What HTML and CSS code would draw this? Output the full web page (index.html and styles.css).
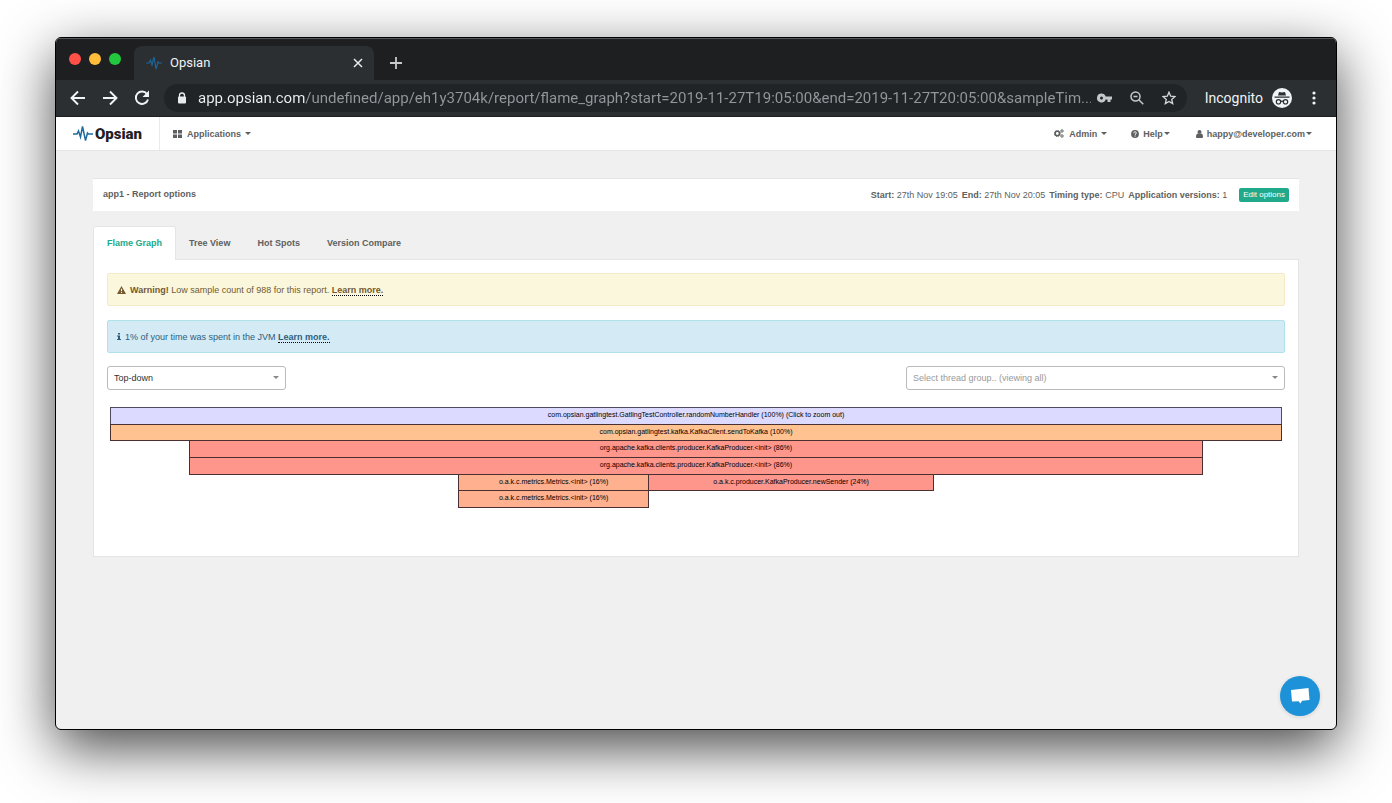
FILE: index.html
```html
<!DOCTYPE html>
<html lang="en">
<head>
<meta charset="utf-8">
<title>Opsian</title>
<link rel="stylesheet" href="styles.css">
</head>
<body>
<div class="window">
  <header class="tabstrip">
    <div class="lights"><span class="light red"></span><span class="light amber"></span><span class="light green"></span></div>
    <div class="browser-tab">
      <svg class="favicon" width="16" height="14" viewBox="0 0 16 14"><path d="M0 7h3l1.500-3 1.500 5 2-8 2 12 2-7 1 1h3" fill="none" stroke="#1d6596" stroke-width="1.200"/></svg>
      <span class="tab-title">Opsian</span>
      <button class="plain close" aria-label="Close tab"><svg width="10" height="10" viewBox="0 0 10 10"><path d="M1 1l8 8M9 1L1 9" stroke="#e8eaed" stroke-width="1.5"/></svg></button>
    </div>
    <button class="plain new-tab" aria-label="New tab"><svg width="12" height="12" viewBox="0 0 12 12"><path d="M6 0v12M0 6h12" stroke="#c8cacc" stroke-width="1.8"/></svg></button>
  </header>
  <div class="toolbar">
    <button class="plain" aria-label="Back"><svg width="16" height="16" viewBox="0 0 16 16"><path d="M15 8H2M8 1.5L1.5 8 8 14.500" fill="none" stroke="#f1f3f4" stroke-width="1.9"/></svg></button>
    <button class="plain" aria-label="Forward"><svg width="16" height="16" viewBox="0 0 16 16"><path d="M1 8h13M8 1.500L14.500 8 8 14.500" fill="none" stroke="#f1f3f4" stroke-width="1.9"/></svg></button>
    <button class="plain" aria-label="Reload"><svg width="16" height="16" viewBox="0 0 16 16"><path d="M13 4A6.200 6.200 0 1 0 14 9.500" fill="none" stroke="#f1f3f4" stroke-width="1.9"/><path d="M15 0.500V7H8.500z" fill="#f1f3f4"/></svg></button>
    <div class="omnibox">
      <svg width="10" height="12" viewBox="0 0 10 12"><path d="M2.500 5V3.500a2.500 2.500 0 0 1 5 0V5" fill="none" stroke="#e8eaed" stroke-width="1.3"/><rect x="1" y="4.500" width="8" height="7" rx="1" fill="#e8eaed"/></svg>
      <input class="url" type="text" aria-label="Address" value="app.opsian.com/undefined/app/eh1y3704k/report/flame_graph?start=2019-11-27T19:05:00&amp;end=2019-11-27T20:05:00&amp;sampleTim...">
      <button class="plain" aria-label="Saved passwords"><svg width="15" height="10" viewBox="0 0 15 10"><path fill-rule="evenodd" d="M4.500.500a4.500 4.500 0 0 1 4.200 3H15v3h-1.500V9h-3V6.500H8.700A4.500 4.500 0 1 1 4.500.500zm0 3a1.500 1.500 0 1 0 0 3 1.500 1.500 0 0 0 0-3z" fill="#c4c7c9"/></svg></button>
      <button class="plain" aria-label="Zoom"><svg width="14" height="14" viewBox="0 0 14 14"><circle cx="5.500" cy="5.500" r="4.500" fill="none" stroke="#c4c7c9" stroke-width="1.5"/><path d="M3.500 5.500h4M9 9l4.300 4.300" stroke="#c4c7c9" stroke-width="1.5"/></svg></button>
      <button class="plain" aria-label="Bookmark"><svg width="14" height="14" viewBox="0 0 14 14"><path d="M7 1.200l1.700 4 4.300.400-3.300 2.800 1 4.200L7 10.400l-3.700 2.200 1-4.200L1 5.600l4.300-.400z" fill="none" stroke="#d4d6d8" stroke-width="1.300"/></svg></button>
    </div>
    <span class="incognito">Incognito</span>
    <svg width="20" height="20" viewBox="0 0 20 20"><circle cx="10" cy="10" r="10" fill="#f1f3f4"/><path d="M7 4l3 .500L13 4l1 3.500H6zM2.500 8.500h15v1.200h-15z" fill="#2b2f32"/><g fill="none" stroke="#2b2f32" stroke-width="1.200"><circle cx="6.500" cy="13.800" r="2.200"/><circle cx="13.500" cy="13.800" r="2.200"/><path d="M8.700 13.500q1.300-.800 2.600 0"/></g></svg>
    <button class="plain menu" aria-label="Menu"><svg width="4" height="14" viewBox="0 0 4 14"><g fill="#f1f3f4"><circle cx="2" cy="2" r="1.600"/><circle cx="2" cy="7" r="1.600"/><circle cx="2" cy="12" r="1.600"/></g></svg></button>
  </div>

  <nav class="navbar">
    <a class="brand" href="#"><svg width="20" height="18" viewBox="0 0 20 18"><path d="M0 9h4l1.500-3 2 6L9.500 1.500l3 14 2-7.500 1 1H20" fill="none" stroke="#1f6a9c" stroke-width="1.500"/></svg><span>Opsian</span></a>
    <button class="plain nav-item apps"><svg width="9" height="8" viewBox="0 0 9 8"><path d="M0 0h4v3.500H0zM5 0h4v3.500H5zM0 4.500h4V8H0zM5 4.500h4V8H5z" fill="#5e5f60"/></svg><span>Applications</span><i class="caret"></i></button>
    <div class="nav-right">
      <button class="plain nav-item admin"><svg width="10" height="9" viewBox="0 0 10 9"><g fill="none" stroke="#5e5f60"><circle cx="3.300" cy="4.500" r="2.200" stroke-width="1.600"/><circle cx="3.300" cy="4.500" r="3" stroke-dasharray="1.200 1.150"/><circle cx="8" cy="2" r="1.200"/><circle cx="8" cy="7" r="1.200"/></g></svg><span>Admin</span><i class="caret"></i></button>
      <button class="plain nav-item help"><svg width="8" height="8" viewBox="0 0 8 8"><circle cx="4" cy="4" r="3.900" fill="#5e5f60"/><path d="M2.700 3.200C2.700 1.300 5.400 1.400 5.300 3c0 .900-1.200.800-1.200 1.900M4.100 5.500v1.100" fill="none" stroke="#fff" stroke-width="1"/></svg><span>Help</span><i class="caret"></i></button>
      <button class="plain nav-item user"><svg width="7" height="8" viewBox="0 0 7 8"><circle cx="3.500" cy="2.100" r="2" fill="#5e5f60"/><path d="M0 7q0-3.500 2-3.500 1.500 1 3 0 2 0 2 3.500 0 1-1 1H1Q0 8 0 7z" fill="#5e5f60"/></svg><span>happy@developer.com</span><i class="caret"></i></button>
    </div>
  </nav>

  <main class="content">
    <section class="options">
      <h1>app1 - Report options</h1>
      <div class="facts">
        <span><b>Start:</b> 27th Nov 19:05</span>
        <span><b>End:</b> 27th Nov 20:05</span>
        <span><b>Timing type:</b> CPU</span>
        <span><b>Application versions:</b> 1</span>
        <button class="plain edit">Edit options</button>
      </div>
    </section>

    <div class="tabs">
      <a class="tab active" href="#">Flame Graph</a>
      <a class="tab" href="#">Tree View</a>
      <a class="tab" href="#">Hot Spots</a>
      <a class="tab" href="#">Version Compare</a>
    </div>
    <section class="panel">
      <p class="alert warning"><svg width="9" height="8" viewBox="0 0 9 8"><path d="M4.500 0L9 8H0z" fill="#74592f"/><path d="M4.500 2.800v2.500M4.500 6v1" stroke="#faf7dc" stroke-width="1.100"/></svg><span><b>Warning!</b> Low sample count of 988 for this report. <a href="#">Learn more.</a></span></p>
      <p class="alert info"><svg width="4" height="7" viewBox="0 0 4 7"><path d="M1 0h2v1.600H1zM0 2.500h3V6h1v1H0V6h1V3.500H0z" fill="#2b5f80"/></svg><span>1% of your time was spent in the JVM <a href="#">Learn more.</a></span></p>
      <div class="filters">
        <div class="picker direction"><select aria-label="Direction"><option>Top-down</option></select></div>
        <div class="picker threads"><select aria-label="Thread group"><option>Select thread group.. (viewing all)</option></select></div>
      </div>
      <div class="graph">
        <div class="level"><div class="frame lilac" style="width:100%">com.opsian.gatlingtest.GatlingTestController.randomNumberHandler (100%) (Click to zoom out)</div></div>
        <div class="level"><div class="frame orange" style="width:100%">com.opsian.gatlingtest.kafka.KafkaClient.sendToKafka (100%)</div></div>
        <div class="level"><div class="frame red-hot" style="margin-left:6.7%;width:86.6%">org.apache.kafka.clients.producer.KafkaProducer.&lt;init&gt; (86%)</div></div>
        <div class="level"><div class="frame red-hot" style="margin-left:6.7%;width:86.6%">org.apache.kafka.clients.producer.KafkaProducer.&lt;init&gt; (86%)</div></div>
        <div class="level"><div class="frame peach" style="margin-left:29.7%;width:16.3%">o.a.k.c.metrics.Metrics.&lt;init&gt; (16%)</div><div class="frame red-hot" style="width:24.4%">o.a.k.c.producer.KafkaProducer.newSender (24%)</div></div>
        <div class="level"><div class="frame peach" style="margin-left:29.7%;width:16.3%">o.a.k.c.metrics.Metrics.&lt;init&gt; (16%)</div></div>
      </div>
    </section>
  </main>
  <button class="plain chat" aria-label="Open chat"><svg width="20" height="18" viewBox="0 0 20 18"><path d="M1 3l17.500-2 1 12-7.500.700L10.500 16.500 8.500 14.200 2 14.500z" fill="#fff"/></svg></button>
</div>
</body>
</html>
```
FILE: styles.css
```css
* { box-sizing: border-box; }
body {
  margin: 0;
  min-height: 100vh;
  padding: 37px 55px 73px;
  display: flex;
  background: #fff;
  font: 9px/12px "Liberation Sans", Arial, sans-serif;
  color: #5e5f60;
}
svg { display: block; flex: none; }
a { color: inherit; text-decoration: none; }
.plain { background: none; border: 0; padding: 0; margin: 0; font: inherit; color: inherit; cursor: pointer; }

.window {
  position: relative;
  flex: 1;
  min-width: 0;
  display: flex;
  flex-direction: column;
  border: 1px solid #000;
  border-radius: 6px;
  overflow: hidden;
  background: #f0f0f0;
  box-shadow: 0 18px 56px rgba(0, 0, 0, .72);
}

.tabstrip {
  height: 42px;
  display: flex;
  align-items: center;
  background: #1d1f21;
  border-top: 1px solid #55585a;
  color: #f1f3f4;
  font: 13px/16px Roboto, sans-serif;
}
.lights { display: flex; gap: 8px; padding: 0 13px 2px; }
.light { width: 12px; height: 12px; border-radius: 50%; }
.red { background: #ff5148; }
.amber { background: #ffbd3a; }
.green { background: #22c93f; }
.browser-tab {
  align-self: flex-end;
  height: 34px;
  width: 240px;
  display: flex;
  align-items: center;
  gap: 8px;
  padding: 0 11px 0 12px;
  border-radius: 8px 8px 0 0;
  background: #2b2f32;
}
.close { margin-left: auto; }
.new-tab { margin: 6px 16px 0; }

.toolbar {
  height: 37px;
  display: flex;
  align-items: center;
  gap: 16px;
  padding: 0 20px 0 14px;
  background: #2b2f32;
  border-bottom: 1px solid #1d1f21;
  color: #f1f3f4;
  font: 13px/16px Roboto, sans-serif;
}
.omnibox {
  flex: 1;
  min-width: 0;
  height: 28px;
  display: flex;
  align-items: center;
  gap: 18px;
  margin-left: -2px;
  padding: 0 11px 0 13px;
  border-radius: 14px;
  background: #212427;
}
.url {
  flex: 1;
  min-width: 0;
  margin: 0 -12px 0 -7px;
  padding: 0;
  border: 0;
  font: 15px/20px Roboto, sans-serif;
  color: transparent;
  background: linear-gradient(to right, #f1f3f4 107px, #94989b 107px);
  background-clip: text;
}
.incognito { margin: 0 -7px 0 2px; font-size: 14px; }
.menu { margin-left: 4px; }

.navbar {
  display: flex;
  align-items: center;
  height: 34px;
  background: #fff;
  border-bottom: 1px solid #e4e5e6;
  font-weight: bold;
}
.brand {
  align-self: stretch;
  display: flex;
  align-items: center;
  gap: 2px;
  padding: 0 17px;
  border-right: 1px solid #e9eaeb;
  color: #1f2022;
  font: 900 15px/18px Roboto, sans-serif;
}
.nav-item { display: flex; align-items: center; }
.caret { border: 3px solid transparent; border-top-color: currentColor; border-bottom: 0; }
.apps { gap: 4px; padding: 0 13px; }
.nav-right { margin-left: auto; padding-right: 24px; display: flex; gap: 24px; }
.apps span, .admin span { margin-left: 1px; }
.admin { gap: 4px; }
.help span, .user span { margin: 0 1px 0 4px; }
.user { margin-left: 2px; }

.content { padding: 27px 37px; }
.options {
  display: flex;
  align-items: center;
  justify-content: space-between;
  gap: 16px;
  min-height: 33px;
  padding: 0 10px;
  background: #fff;
  border-top: 1px solid #e4e5e6;
}
.options h1 { margin: 0 0 2px; font-size: 9px; line-height: 12px; }
.facts { display: flex; align-items: center; gap: 4px; }
.edit { margin-left: 8px; height: 14px; padding: 0 4px; border-radius: 2px; background: #20aa8b; color: #fff; font-size: 8px; }

.tabs { display: flex; margin-top: 15px; }
.tab { margin-right: -1px; padding: 10px 13px; border: 1px solid transparent; border-bottom: 0; font-weight: bold; }
.tab.active {
  margin-bottom: -1px;
  padding-bottom: 11px;
  position: relative;
  border-color: #e4e5e6;
  border-radius: 3px 3px 0 0;
  background: #fff;
  color: #20aa8b;
}
.panel { padding: 13px 13px 49px; background: #fff; border: 1px solid #e4e5e6; }
.alert { display: flex; align-items: center; gap: 4px; min-height: 33px; margin: 0 0 14px; padding: 0 9px; border: 1px solid; border-radius: 2px; }
.alert a { font-weight: bold; border-bottom: 1px dotted #000; }
.warning { background: #faf7dc; border-color: #f5eac8; color: #74592f; }
.info { margin-bottom: 13px; background: #d4eaf5; border-color: #b0e2ee; color: #2b5f80; }

.filters { display: flex; justify-content: space-between; gap: 16px; }
.picker { position: relative; height: 24px; }
.picker::after {
  content: "";
  position: absolute;
  top: 10px;
  right: 7px;
  border: 3px solid transparent;
  border-top-color: #888;
  border-bottom: 0;
  pointer-events: none;
}
.picker select {
  appearance: none;
  width: 100%;
  height: 100%;
  padding: 0 6px;
  border: 1px solid #bbb;
  border-radius: 3px;
  background: #fff;
  color: #333;
  font: inherit;
}
.direction { flex: 0 1 179px; }
.threads { flex: 0 1 379px; }
.threads select { color: #999; }

.graph { margin: 17px 3px 0; display: grid; grid-template-rows: repeat(6, 1fr); height: 100px; color: #000; font-size: 7px; }
.level { display: flex; margin-bottom: -1px; }
.frame { border: 1px solid #4a3030; margin-right: -1px; overflow: hidden; white-space: nowrap; text-align: center; line-height: 14px; }
.lilac { background: #dcdaff; border-color: #4c4b60; }
.orange { background: #ffc290; }
.red-hot { background: #ff968c; }
.peach { background: #ffb08e; }

.chat {
  position: absolute;
  right: 16px;
  bottom: 13px;
  width: 40px;
  height: 40px;
  display: grid;
  place-items: center;
  border-radius: 50%;
  background: #1d92d8;
  box-shadow: 0 1px 4px rgba(0, 0, 0, .12);
}
```
